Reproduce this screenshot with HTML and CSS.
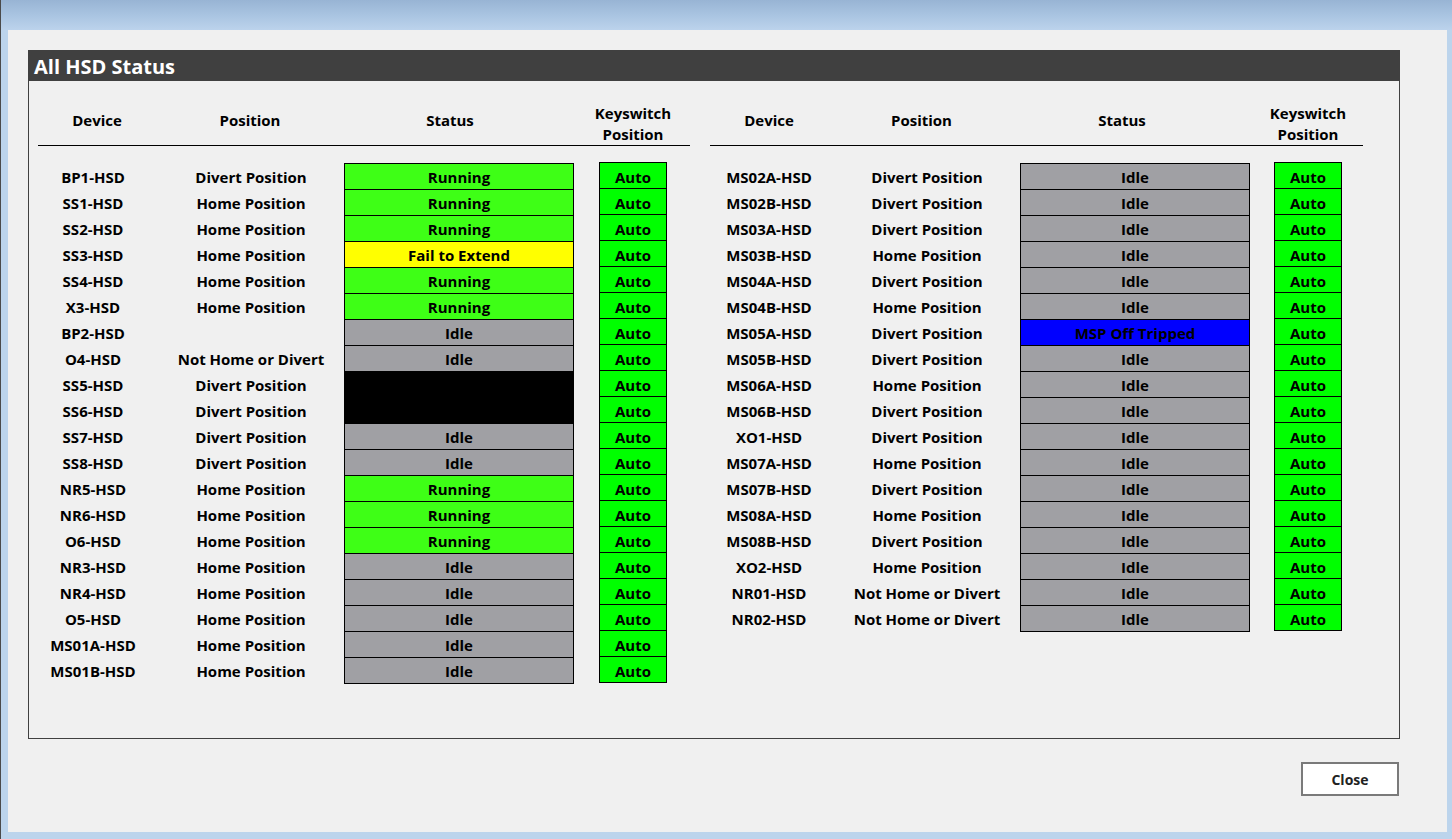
FILE: index.html
```html
<!DOCTYPE html>
<html>
<head>
<meta charset="utf-8">
<title>All HSD Status</title>
<link rel="stylesheet" href="styles.css">
</head>
<body>
<div class="frame">
  <div class="caption"></div>
  <div class="client">
    <section class="panel">
      <h1 class="panel-title">All HSD Status</h1>
      <div class="tables">
        <div class="tbl tbl-left">
          <div class="thead">
            <div class="th th-dev">Device</div>
            <div class="th th-pos">Position</div>
            <div class="th th-st">Status</div>
            <div class="th th-ks">Keyswitch<br>Position</div>
          </div>
          <div class="tbody">
            <div class="row"><div class="dev">BP1-HSD</div><div class="pos">Divert Position</div><div class="st run">Running</div><div class="ks">Auto</div></div>
            <div class="row"><div class="dev">SS1-HSD</div><div class="pos">Home Position</div><div class="st run">Running</div><div class="ks">Auto</div></div>
            <div class="row"><div class="dev">SS2-HSD</div><div class="pos">Home Position</div><div class="st run">Running</div><div class="ks">Auto</div></div>
            <div class="row"><div class="dev">SS3-HSD</div><div class="pos">Home Position</div><div class="st fail">Fail to Extend</div><div class="ks">Auto</div></div>
            <div class="row"><div class="dev">SS4-HSD</div><div class="pos">Home Position</div><div class="st run">Running</div><div class="ks">Auto</div></div>
            <div class="row"><div class="dev">X3-HSD</div><div class="pos">Home Position</div><div class="st run">Running</div><div class="ks">Auto</div></div>
            <div class="row"><div class="dev">BP2-HSD</div><div class="pos"></div><div class="st idle">Idle</div><div class="ks">Auto</div></div>
            <div class="row"><div class="dev">O4-HSD</div><div class="pos">Not Home or Divert</div><div class="st idle">Idle</div><div class="ks">Auto</div></div>
            <div class="row"><div class="dev">SS5-HSD</div><div class="pos">Divert Position</div><div class="st blk"></div><div class="ks">Auto</div></div>
            <div class="row"><div class="dev">SS6-HSD</div><div class="pos">Divert Position</div><div class="st blk"></div><div class="ks">Auto</div></div>
            <div class="row"><div class="dev">SS7-HSD</div><div class="pos">Divert Position</div><div class="st idle">Idle</div><div class="ks">Auto</div></div>
            <div class="row"><div class="dev">SS8-HSD</div><div class="pos">Divert Position</div><div class="st idle">Idle</div><div class="ks">Auto</div></div>
            <div class="row"><div class="dev">NR5-HSD</div><div class="pos">Home Position</div><div class="st run">Running</div><div class="ks">Auto</div></div>
            <div class="row"><div class="dev">NR6-HSD</div><div class="pos">Home Position</div><div class="st run">Running</div><div class="ks">Auto</div></div>
            <div class="row"><div class="dev">O6-HSD</div><div class="pos">Home Position</div><div class="st run">Running</div><div class="ks">Auto</div></div>
            <div class="row"><div class="dev">NR3-HSD</div><div class="pos">Home Position</div><div class="st idle">Idle</div><div class="ks">Auto</div></div>
            <div class="row"><div class="dev">NR4-HSD</div><div class="pos">Home Position</div><div class="st idle">Idle</div><div class="ks">Auto</div></div>
            <div class="row"><div class="dev">O5-HSD</div><div class="pos">Home Position</div><div class="st idle">Idle</div><div class="ks">Auto</div></div>
            <div class="row"><div class="dev">MS01A-HSD</div><div class="pos">Home Position</div><div class="st idle">Idle</div><div class="ks">Auto</div></div>
            <div class="row"><div class="dev">MS01B-HSD</div><div class="pos">Home Position</div><div class="st idle">Idle</div><div class="ks">Auto</div></div>
          </div>
        </div>
        <div class="tbl tbl-right">
          <div class="thead">
            <div class="th th-dev">Device</div>
            <div class="th th-pos">Position</div>
            <div class="th th-st">Status</div>
            <div class="th th-ks">Keyswitch<br>Position</div>
          </div>
          <div class="tbody">
            <div class="row"><div class="dev">MS02A-HSD</div><div class="pos">Divert Position</div><div class="st idle">Idle</div><div class="ks">Auto</div></div>
            <div class="row"><div class="dev">MS02B-HSD</div><div class="pos">Divert Position</div><div class="st idle">Idle</div><div class="ks">Auto</div></div>
            <div class="row"><div class="dev">MS03A-HSD</div><div class="pos">Divert Position</div><div class="st idle">Idle</div><div class="ks">Auto</div></div>
            <div class="row"><div class="dev">MS03B-HSD</div><div class="pos">Home Position</div><div class="st idle">Idle</div><div class="ks">Auto</div></div>
            <div class="row"><div class="dev">MS04A-HSD</div><div class="pos">Divert Position</div><div class="st idle">Idle</div><div class="ks">Auto</div></div>
            <div class="row"><div class="dev">MS04B-HSD</div><div class="pos">Home Position</div><div class="st idle">Idle</div><div class="ks">Auto</div></div>
            <div class="row"><div class="dev">MS05A-HSD</div><div class="pos">Divert Position</div><div class="st msp">MSP Off Tripped</div><div class="ks">Auto</div></div>
            <div class="row"><div class="dev">MS05B-HSD</div><div class="pos">Divert Position</div><div class="st idle">Idle</div><div class="ks">Auto</div></div>
            <div class="row"><div class="dev">MS06A-HSD</div><div class="pos">Home Position</div><div class="st idle">Idle</div><div class="ks">Auto</div></div>
            <div class="row"><div class="dev">MS06B-HSD</div><div class="pos">Divert Position</div><div class="st idle">Idle</div><div class="ks">Auto</div></div>
            <div class="row"><div class="dev">XO1-HSD</div><div class="pos">Divert Position</div><div class="st idle">Idle</div><div class="ks">Auto</div></div>
            <div class="row"><div class="dev">MS07A-HSD</div><div class="pos">Home Position</div><div class="st idle">Idle</div><div class="ks">Auto</div></div>
            <div class="row"><div class="dev">MS07B-HSD</div><div class="pos">Divert Position</div><div class="st idle">Idle</div><div class="ks">Auto</div></div>
            <div class="row"><div class="dev">MS08A-HSD</div><div class="pos">Home Position</div><div class="st idle">Idle</div><div class="ks">Auto</div></div>
            <div class="row"><div class="dev">MS08B-HSD</div><div class="pos">Divert Position</div><div class="st idle">Idle</div><div class="ks">Auto</div></div>
            <div class="row"><div class="dev">XO2-HSD</div><div class="pos">Home Position</div><div class="st idle">Idle</div><div class="ks">Auto</div></div>
            <div class="row"><div class="dev">NR01-HSD</div><div class="pos">Not Home or Divert</div><div class="st idle">Idle</div><div class="ks">Auto</div></div>
            <div class="row"><div class="dev">NR02-HSD</div><div class="pos">Not Home or Divert</div><div class="st idle">Idle</div><div class="ks">Auto</div></div>
          </div>
        </div>
      </div>
    </section>
    <div class="footer">
      <button class="btn-close" type="button">Close</button>
    </div>
  </div>
</div>
</body>
</html>
```
FILE: styles.css
```css
* { box-sizing: border-box; }
html, body { margin: 0; padding: 0; }
body {
  width: 1452px;
  height: 839px;
  overflow: hidden;
  font-family: "Open Sans", "Noto Sans", "Liberation Sans", sans-serif;
  font-weight: 700;
  font-size: 15px;
  color: #000;
}
.frame {
  width: 1452px;
  height: 839px;
  display: flex;
  flex-direction: column;
  background: #bcd4ec;
  border-left: 1px solid #4a4a4a;
}
.caption {
  height: 30px;
  flex: none;
  background: linear-gradient(#98b4d4, #a9c4e1 50%, #bcd3ec);
}
.client {
  flex: 1;
  margin: 0 5px 7px 7px;
  background: #f0f0f0;
  padding: 20px 47px 0 20px;
  display: flex;
  flex-direction: column;
}
.panel {
  width: 1372px;
  height: 689px;
  border: 1px solid #404040;
  border-top: none;
}
.panel-title {
  margin: 0 -1px;
  height: 31px;
  background: #404040;
  color: #fff;
  font-size: 20px;
  font-weight: 700;
  line-height: 34px;
  padding-left: 6px;
}
.tables {
  display: flex;
  gap: 20px;
  padding-left: 9px;
}
.tbl-left { width: 652px; }
.tbl-right { width: 653px; }
.thead, .row {
  display: grid;
}
.tbl-left .thead, .tbl-left .row {
  grid-template-columns: 118px 188px 230px 25px 68px;
}
.tbl-right .thead, .tbl-right .row {
  grid-template-columns: 118px 192px 230px 24px 68px;
}
.thead {
  margin-top: 21px;
  height: 44px;
  border-bottom: 1px solid #000;
}
.th {
  display: flex;
  justify-content: center;
  align-items: center;
  line-height: 21px;
  padding-bottom: 6px;
  white-space: nowrap;
}
.th-ks {
  grid-column: 5;
  align-self: start;
  padding: 1px 0 0;
  text-align: center;
}
.tbl-left .th-st { padding-right: 18px; }
.tbl-right .th-st { padding-right: 26px; }
.tbl-right .th-pos { padding-right: 5px; }
.tbody { margin-top: 17px; }
.row { height: 26px; }
.dev, .pos {
  display: flex;
  justify-content: center;
  align-items: center;
  white-space: nowrap;
  line-height: 26px;
  padding-top: 1px;
}
.tbl-left .dev { padding-right: 8px; }
.tbl-left .pos { padding-left: 2px; }
.tbl-right .pos { padding-left: 6px; }
.st, .ks {
  height: 26px;
  border: 1px solid #000;
  border-bottom: none;
  text-align: center;
  line-height: 25px;
  padding-top: 1px;
  white-space: nowrap;
}
.row:last-child .st, .row:last-child .ks {
  height: 27px;
  border-bottom: 1px solid #000;
}
.ks {
  grid-column: 5;
  background: #00ff00;
  margin-top: -1px;
  padding-top: 2px;
}
.run { background: #3eff16; }
.idle { background: #a0a0a4; }
.fail { background: #ffff00; }
.blk { background: #000; }
.msp { background: #0000ff; }
.footer {
  display: flex;
  justify-content: flex-end;
  margin-top: 23px;
  padding-right: 1px;
}
.btn-close {
  width: 98px;
  height: 34px;
  background: #fff;
  border: 2px solid #7a7a7a;
  font-family: inherit;
  font-weight: 700;
  font-size: 14px;
  color: #222;
  padding: 0;
  border-radius: 0;
}
```
